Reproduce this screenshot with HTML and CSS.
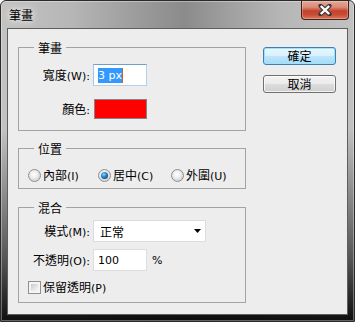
FILE: index.html
```html
<!DOCTYPE html>
<html lang="zh-Hant">
<head>
<meta charset="utf-8">
<title>筆畫</title>
<link rel="stylesheet" href="styles.css">
</head>
<body>
<div class="window">
  <div class="titlebar">
    <span class="title">筆畫</span>
    <div class="close">
      <svg width="14" height="12" viewBox="0 0 14 12">
        <path d="M2.6 1.8 L11.4 10.2 M11.4 1.8 L2.6 10.2" stroke="#3a3a3a" stroke-width="4.4" stroke-linecap="round"/>
        <path d="M2.8 2 L11.2 10 M11.2 2 L2.8 10" stroke="#ffffff" stroke-width="2.4" stroke-linecap="butt"/>
      </svg>
    </div>
  </div>
  <div class="client">
    <div class="groups">
      <fieldset class="group group-stroke">
        <legend>筆畫</legend>
        <div class="form-grid grid-stroke">
          <label class="lbl">寬度<span class="lat">(W):</span></label>
          <div class="textbox textbox-focus"><span class="sel lat">3 px</span><span class="caret"></span></div>
          <label class="lbl">顏色<span class="lat">:</span></label>
          <div class="swatch"></div>
        </div>
      </fieldset>

      <fieldset class="group group-pos">
        <legend>位置</legend>
        <div class="radio-row">
          <div class="opt opt-1"><span class="radio"></span><span>內部<span class="lat">(I)</span></span></div>
          <div class="opt opt-2"><span class="radio"><span class="dot"></span></span><span>居中<span class="lat">(C)</span></span></div>
          <div class="opt"><span class="radio"></span><span>外圍<span class="lat">(U)</span></span></div>
        </div>
      </fieldset>

      <fieldset class="group group-blend">
        <legend>混合</legend>
        <div class="form-grid grid-blend">
          <label class="lbl">模式<span class="lat">(M):</span></label>
          <div class="select"><span>正常</span>
            <svg class="arrow" width="7" height="4" viewBox="0 0 7 4"><path d="M0 0 H7 L3.5 4 Z" fill="#000"/></svg>
          </div>
          <label class="lbl">不透明<span class="lat">(O):</span></label>
          <div class="with-unit"><div class="textbox"><span class="lat">100</span></div><span class="lat unit">%</span></div>
        </div>
        <div class="check-row"><span class="check"><span class="check-in"></span></span><span>保留透明<span class="lat">(P)</span></span></div>
      </fieldset>
    </div>

    <div class="buttons">
      <button class="btn btn-default">確定</button>
      <button class="btn">取消</button>
    </div>
  </div>
</div>
</body>
</html>
```

FILE: styles.css
```css
html, body {
  margin: 0;
  padding: 0;
  background: #ffffff;
}

body {
  font-family: "Noto Sans CJK TC", "Noto Sans CJK SC", sans-serif;
  font-size: 12px;
  line-height: 15px;
  color: #000;
}

.lat {
  font-family: "DejaVu Sans", "Noto Sans CJK TC", sans-serif;
  font-size: 11px;
}

.window {
  width: 355px;
  height: 322px;
  box-sizing: border-box;
  border: 1px solid #2a2a2a;
  border-radius: 6px 6px 0 0;
  overflow: hidden;
  display: flex;
  flex-direction: column;
  background:
    linear-gradient(to bottom, rgba(0,0,0,0) 0%, rgba(0,0,0,0) 40%, rgba(0,0,0,0.55) 80%, rgba(0,0,0,0.92) 100%),
    linear-gradient(to right, #c3c3c3 0%, #b6b6b6 20%, #9a9a9a 40%, #8b8b8b 52%, #a2a2a2 66%, #b7b7b7 80%, #c1c1c1 100%);
  box-shadow: inset 0 0 0 1px rgba(255,255,255,0.35);
}

.titlebar {
  height: 27px;
  flex: none;
  display: flex;
  align-items: flex-start;
  padding-left: 8px;
}

.title {
  margin-top: 7px;
  line-height: 14px;
  text-shadow: 0 0 6px rgba(255,255,255,0.9), 0 0 10px rgba(255,255,255,0.6);
}

.close {
  margin-left: auto;
  margin-right: 5px;
  width: 48px;
  height: 19px;
  box-sizing: border-box;
  border: 1px solid #4a1e16;
  border-top: none;
  border-radius: 0 0 4px 4px;
  background: linear-gradient(to bottom, #e6a896 0%, #d98a76 35%, #c4422c 55%, #c94a33 75%, #d77a62 100%);
  box-shadow: inset 0 0 0 1px rgba(255,255,255,0.25);
  display: flex;
  align-items: center;
  justify-content: center;
}

.client {
  flex: 1;
  margin: 0 6px 6px 6px;
  border: 1px solid #5e5e5e;
  background: #ededed;
  display: flex;
  align-items: flex-start;
  padding: 11px 0 0 10px;
}

.groups {
  display: flex;
  flex-direction: column;
  width: 228px;
}

.group {
  margin: 0;
  padding: 0;
  min-width: 0;
  width: 228px;
  box-sizing: border-box;
  border: 1px solid #a3a3a3;
}

.group legend {
  margin-left: 15px;
  padding: 0 4px;
  line-height: 15px;
  font-size: 12px;
}

.group-pos {
  margin-top: 10px;
}

.group-blend {
  margin-top: 11px;
}

.form-grid {
  display: grid;
  grid-template-columns: 74px auto;
  align-items: center;
  justify-items: start;
}

.grid-stroke {
  padding: 9px 0 11px 0;
  row-gap: 13px;
}

.grid-blend {
  padding-top: 5px;
  row-gap: 7px;
}

.lbl {
  justify-self: end;
  padding-right: 3px;
  white-space: nowrap;
}

.textbox {
  width: 54px;
  height: 22px;
  box-sizing: border-box;
  border: 1px solid #dedede;
  background: #fff;
  display: flex;
  align-items: center;
  padding-left: 4px;
}

.textbox-focus {
  border-color: #6a9fd0 #b3d1ec #b3d1ec #a6c6e6;
}

.sel {
  background: #3399ff;
  color: #fff;
  line-height: 15px;
  padding: 0 0 0 0;
}

.caret {
  width: 1px;
  height: 15px;
  background: #c8651a;
}

.swatch {
  margin-left: 1px;
  width: 53px;
  height: 20px;
  box-sizing: border-box;
  border: 1px solid #858585;
  background: #ff0000;
}

.radio-row {
  display: flex;
  align-items: center;
  height: 16px;
  padding: 11px 0 5px 9px;
}

.opt {
  display: flex;
  align-items: center;
  gap: 2px;
}

.opt-1 { width: 70px; }
.opt-2 { width: 73px; }

.radio {
  width: 13px;
  height: 13px;
  box-sizing: border-box;
  border-radius: 50%;
  border: 1px solid #8f9090;
  background: radial-gradient(circle at 45% 40%, #ffffff 0%, #f0f0f0 35%, #d2d2d2 75%, #ececec 100%);
  display: flex;
  align-items: center;
  justify-content: center;
  flex: none;
}

.dot {
  width: 7px;
  height: 7px;
  border-radius: 50%;
  background: radial-gradient(circle at 40% 35%, #9ad6ff 0%, #2f8fd8 35%, #0f4f8a 75%, #0a355f 100%);
}

.select {
  width: 113px;
  height: 22px;
  box-sizing: border-box;
  border: 1px solid #dcdcdc;
  background: #fff;
  display: flex;
  align-items: center;
  padding-left: 6px;
}

.arrow {
  margin-left: auto;
  margin-right: 4px;
}

.with-unit {
  display: flex;
  align-items: center;
  gap: 5px;
}

.check-row {
  display: flex;
  align-items: center;
  gap: 2px;
  height: 15px;
  margin-top: 9px;
  padding: 0 0 7px 9px;
}

.check {
  width: 13px;
  height: 13px;
  box-sizing: border-box;
  border: 1px solid #8f9090;
  background: #f4f4f4;
  padding: 2px;
  flex: none;
  display: flex;
}

.check-in {
  flex: 1;
  background: linear-gradient(135deg, #c9c9c9 0%, #e2e2e2 50%, #f6f6f6 100%);
}

.buttons {
  display: flex;
  flex-direction: column;
  gap: 10px;
  margin-left: 17px;
  margin-top: 7px;
}

.btn {
  width: 73px;
  height: 18px;
  box-sizing: border-box;
  padding: 0;
  margin: 0;
  border: 1px solid #707070;
  border-radius: 3px;
  font-family: "Noto Sans CJK TC", sans-serif;
  font-size: 12px;
  line-height: 14px;
  color: #000;
  background: linear-gradient(to bottom, #f3f3f3 0%, #ebebeb 50%, #dddddd 50%, #cfcfcf 100%);
  box-shadow: inset 0 0 0 1px rgba(255,255,255,0.75);
  display: flex;
  align-items: center;
  justify-content: center;
}

.btn-default {
  border-color: #3c7fb1;
  background: linear-gradient(to bottom, #eaf6fd 0%, #d9f0fc 50%, #bee6fd 50%, #a7d9f5 100%);
  box-shadow: inset 0 0 0 1px #9fe3fb;
}
```
